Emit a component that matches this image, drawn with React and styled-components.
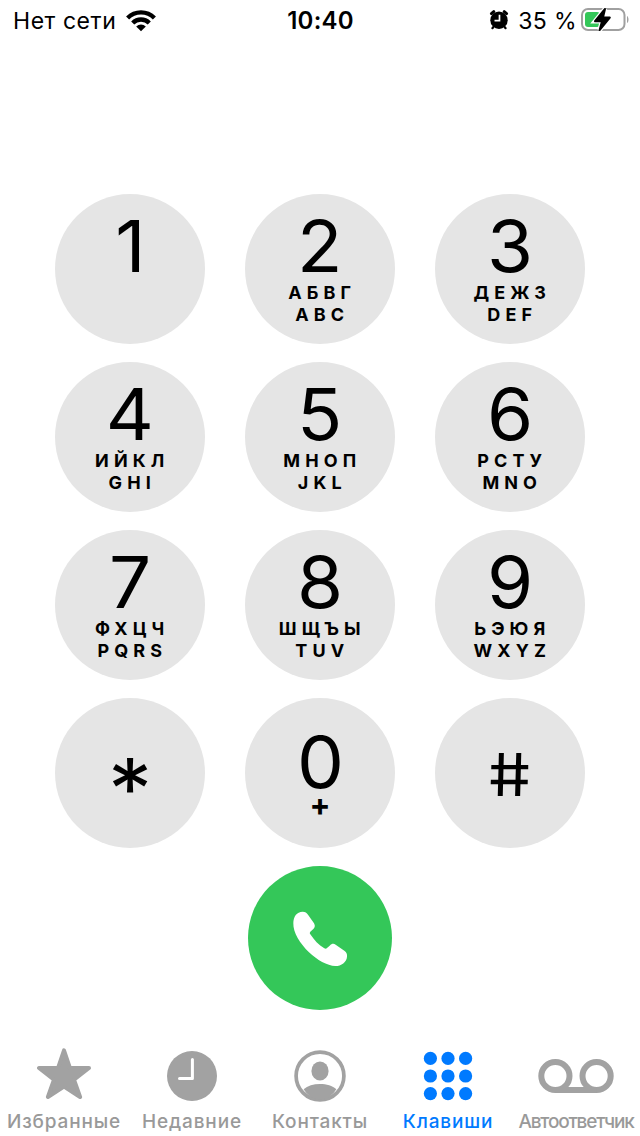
import React from "react";
import styled, { createGlobalStyle } from "styled-components";

const GlobalStyle = createGlobalStyle`
  body {
    margin: 0;
    background: #fff;
    font-family: Inter, "Liberation Sans", sans-serif;
    color: #000;
  }
`;

const Screen = styled.div`
  width: 640px;
  height: 1136px;
  display: flex;
  flex-direction: column;
  overflow: hidden;
`;

const StatusBar = styled.header`
  height: 40px;
  display: grid;
  grid-template-columns: 1fr auto 1fr;
  align-items: center;
  padding: 0 11px 0 13px;
  font-size: 23px;
  line-height: 36px;
  white-space: nowrap;
`;

const StatusGroup = styled.div`
  height: 40px;
  display: flex;
  align-items: center;
  justify-content: ${(props) => props.$align};
`;

const Carrier = styled.span`
  width: 112px;
  padding-top: 2px;
  letter-spacing: 0.55px;
`;

const Clock = styled.span`
  padding-top: 2px;
  margin-right: 1px;
  font-size: 24px;
  font-weight: 600;
  letter-spacing: 0.2px;
`;

const Percent = styled.span`
  margin: 0 4px 0 9px;
  padding-top: 2px;
  letter-spacing: 0.4px;
`;

const Keypad = styled.main`
  display: grid;
  grid-template-columns: repeat(3, 150px);
  gap: 18px 40px;
  justify-content: center;
  padding-top: 154px;
`;

const Key = styled.button`
  width: 150px;
  height: 150px;
  padding: ${(props) => props.$top || 17}px 0 0;
  border: 0;
  border-radius: 50%;
  background: #e5e5e5;
  color: #000;
  font-family: inherit;
  display: flex;
  flex-direction: column;
  align-items: center;
`;

const Digit = styled.span`
  font-size: ${(props) => props.$size || 71}px;
  line-height: 70px;
  transform: ${(props) => props.$transform || "scaleX(1.05)"};
`;

const LetterGroup = styled.span`
  display: flex;
  flex-direction: column;
  align-items: center;
  margin-top: 1px;
`;

const Letters = styled.span`
  font-size: 18px;
  font-weight: 700;
  line-height: 22px;
  letter-spacing: 5.1px;
  padding-left: 4.5px;
  white-space: nowrap;
`;

const Plus = styled.span`
  margin-top: -2px;
  font-size: 31px;
  font-weight: 700;
  line-height: 20px;
`;

const CallButton = styled.button`
  width: 144px;
  height: 144px;
  margin: 18px auto 0;
  padding: 0;
  border: 0;
  border-radius: 50%;
  background: #34c759;
  display: flex;
`;

const TabBar = styled.nav`
  display: grid;
  grid-template-columns: repeat(5, 128px);
  margin-top: 38px;
`;

const Tab = styled.div`
  display: flex;
  flex-direction: column;
  align-items: center;
  color: ${(props) => (props.$active ? "#007aff" : "#a2a2a2")};
`;

const TabLabel = styled.span`
  margin-top: 6px;
  font-size: 19px;
  font-weight: 500;
  line-height: 24px;
  white-space: nowrap;
  letter-spacing: ${(props) => props.$spacing}px;
  color: ${(props) => (props.$active ? "#007aff" : "#999")};
`;

const WifiIcon = () => (
  <svg width="32" height="24" viewBox="0 0 32 24">
    <path d="M16 23.3 11.2 18.5a7 7 0 0 1 9.6 0Z" />
    <g fill="none" stroke="#000" strokeWidth="4.3">
      <path d="M7.7 15a11.6 11.6 0 0 1 16.6 0" />
      <path d="M2.6 10a18.8 18.8 0 0 1 26.8 0" />
    </g>
  </svg>
);

const AlarmIcon = () => (
  <svg width="20" height="22" viewBox="0 0 20 22">
    <circle cx="10" cy="11.2" r="8.7" />
    <g stroke="#000" strokeWidth="3" strokeLinecap="round">
      <path d="M2.4 4.6 4.8 2.6M17.6 4.6 15.2 2.6" />
      <path d="M4.4 18 3.4 19.2M15.6 18l1 1.2" strokeWidth="2.2" />
    </g>
    <path d="M10.5 5.8v5.8H5.5" fill="none" stroke="#fff" strokeWidth="1.7" />
  </svg>
);

const BOLT = "M24 2 14 14.2H21L18.6 23 28.8 10.6H22Z";

const BatteryIcon = () => (
  <svg width="48" height="26" viewBox="0 0 48 26">
    <rect x="1" y="2" width="42.5" height="21" rx="6" fill="none" stroke="#a0a0a0" strokeWidth="2" />
    <path d="M46 9v7c2-1 2-6 0-7Z" fill="#a0a0a0" />
    <rect x="4" y="5" width="15" height="15" rx="3" fill="#34c759" />
    <path d={BOLT} fill="#fff" stroke="#fff" strokeWidth="4.5" />
    <path d={BOLT} stroke="#000" strokeWidth="2" strokeLinejoin="round" />
  </svg>
);

const PhoneIcon = () => (
  <svg width="144" height="144" viewBox="24 18 432 432">
    <path
      fill="#fff"
      d="M160 190C160 170 170 155 188 155C196 155 200 158 204 164L222 190C226 197 225 202 220 207L211 215C209 218 209 220 211 223C222 240 236 255 253 265C256 267 259 267 261 264L269 257C275 251 281 250 287 254L313 272C320 277 322 282 321 290C320 306 304 318 286 318C262 318 231 300 207 277C180 251 159 218 160 190Z"
    />
  </svg>
);

const TabIcon = ({ children }) => (
  <svg width="80" height="56" viewBox="0 0 80 56" fill="currentColor">
    {children}
  </svg>
);

const StarIcon = () => (
  <TabIcon>
    <path
      d="M40 2.4 45.9 20H65L50 31.6 56.1 49 40 38.6 23.9 49 30 31.6 15 20H34.1Z"
      stroke="currentColor"
      strokeWidth="4"
      strokeLinejoin="round"
    />
  </TabIcon>
);

const RecentsIcon = () => (
  <TabIcon>
    <circle cx="40" cy="28" r="25" />
    <path
      d="M40.4 11.5v19H27.5"
      fill="none"
      stroke="#fff"
      strokeWidth="3"
      strokeLinecap="round"
      strokeLinejoin="round"
    />
  </TabIcon>
);

const ContactsIcon = () => (
  <TabIcon>
    <circle cx="40" cy="28" r="23.9" fill="none" stroke="currentColor" strokeWidth="3.7" />
    <ellipse cx="40" cy="23" rx="8.6" ry="9.4" />
    <path d="M23.6 41.2C27.5 37.8 33.5 36 40 36s12.5 1.8 16.4 5.2A22.5 22.5 0 0 1 40 52a22.5 22.5 0 0 1-16.4-10.8Z" />
  </TabIcon>
);

const KeypadIcon = () => (
  <TabIcon>
    {[10.4, 28, 45.6].map((y) =>
      [22.4, 40, 57.6].map((x) => <circle key={`${x}-${y}`} cx={x} cy={y} r="6.6" />)
    )}
  </TabIcon>
);

const VoicemailIcon = () => (
  <TabIcon>
    <g fill="none" stroke="currentColor" strokeWidth="6">
      <circle cx="19.4" cy="28" r="14.1" />
      <circle cx="60.6" cy="28" r="14.1" />
      <path d="M19.4 42.1h41.2" />
    </g>
  </TabIcon>
);

const keys = [
  { digit: "1" },
  { digit: "2", letters: ["АБВГ", "ABC"] },
  { digit: "3", letters: ["ДЕЖЗ", "DEF"] },
  { digit: "4", letters: ["ИЙКЛ", "GHI"] },
  { digit: "5", letters: ["МНОП", "JKL"] },
  { digit: "6", letters: ["РСТУ", "MNO"] },
  { digit: "7", letters: ["ФХЦЧ", "PQRS"] },
  { digit: "8", letters: ["ШЩЪЫ", "TUV"] },
  { digit: "9", letters: ["ЬЭЮЯ", "WXYZ"] },
  { digit: "*", top: 56, size: 84 },
  { digit: "0", top: 28.5, plus: true },
  { digit: "#", top: 42, size: 59, transform: "scaleX(1.15) skewX(8deg)" },
];

const tabs = [
  { label: "Избранные", Icon: StarIcon, spacing: 0.85 },
  { label: "Недавние", Icon: RecentsIcon, spacing: 0.85 },
  { label: "Контакты", Icon: ContactsIcon, spacing: 0.85 },
  { label: "Клавиши", Icon: KeypadIcon, spacing: 0.85, active: true },
  { label: "Автоответчик", Icon: VoicemailIcon, spacing: -1.2 },
];

const App = () => {
  return (
    <>
      <GlobalStyle />
      <Screen>
        <StatusBar>
          <StatusGroup $align="flex-start">
            <Carrier>Нет сети</Carrier>
            <WifiIcon />
          </StatusGroup>
          <Clock>10:40</Clock>
          <StatusGroup $align="flex-end">
            <AlarmIcon />
            <Percent>35 %</Percent>
            <BatteryIcon />
          </StatusGroup>
        </StatusBar>

        <Keypad>
          {keys.map(({ digit, letters, top, size, transform, plus }) => (
            <Key key={digit} $top={top}>
              <Digit $size={size} $transform={transform}>{digit}</Digit>
              {letters && (
                <LetterGroup>
                  {letters.map((line) => <Letters key={line}>{line}</Letters>)}
                </LetterGroup>
              )}
              {plus && <Plus>+</Plus>}
            </Key>
          ))}
        </Keypad>

        <CallButton>
          <PhoneIcon />
        </CallButton>

        <TabBar>
          {tabs.map(({ label, Icon, spacing, active }) => (
            <Tab key={label} $active={active}>
              <Icon />
              <TabLabel $spacing={spacing} $active={active}>{label}</TabLabel>
            </Tab>
          ))}
        </TabBar>
      </Screen>
    </>
  );
};

export default App;
